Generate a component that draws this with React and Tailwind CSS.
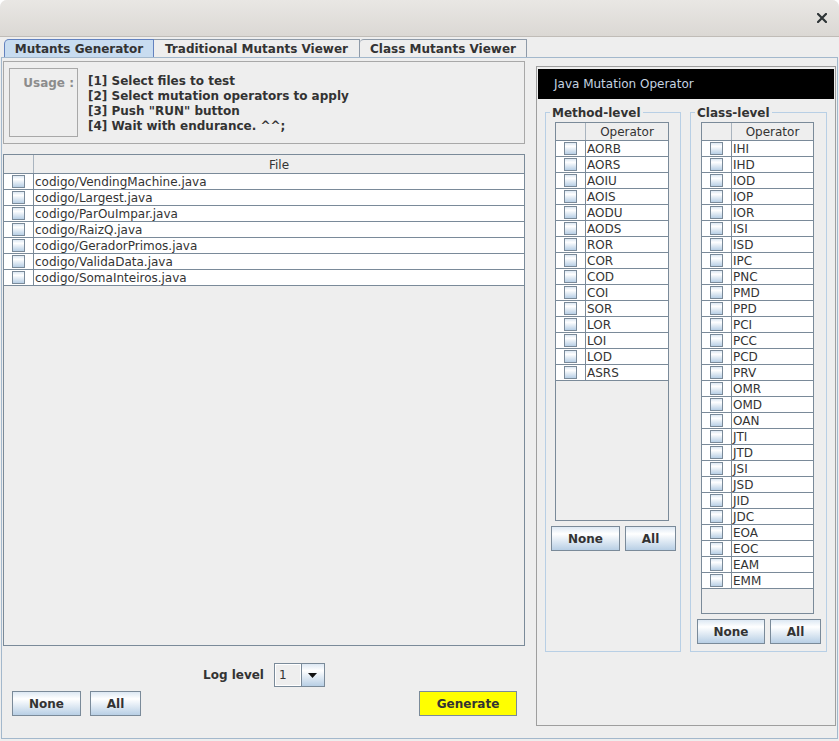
import React from "react";

const files = [
  "codigo/VendingMachine.java",
  "codigo/Largest.java",
  "codigo/ParOuImpar.java",
  "codigo/RaizQ.java",
  "codigo/GeradorPrimos.java",
  "codigo/ValidaData.java",
  "codigo/SomaInteiros.java",
];

const methodOps = ["AORB", "AORS", "AOIU", "AOIS", "AODU", "AODS", "ROR", "COR", "COD", "COI", "SOR", "LOR", "LOI", "LOD", "ASRS"];

const classOps = [
  "IHI", "IHD", "IOD", "IOP", "IOR", "ISI", "ISD", "IPC", "PNC", "PMD", "PPD", "PCI", "PCC", "PCD",
  "PRV", "OMR", "OMD", "OAN", "JTI", "JTD", "JSI", "JSD", "JID", "JDC", "EOA", "EOC", "EAM", "EMM",
];

// swing "ocean" checkbox
const CheckBox = () => (
  <span className="block w-[13px] h-[13px] border border-[#7a8a99] bg-linear-to-b from-[#dde8f3] via-white via-30% to-[#b8cfe5]" />
);

const Btn = ({ w, children }) => (
  <button className={`h-[25px] ${w} shrink-0 border border-[#7a8a99] bg-linear-to-b from-[#dde8f3] via-white via-30% to-[#b8cfe5] text-[12px] font-bold text-[#333333] leading-none`}>
    {children}
  </button>
);

const Table = ({ header, rows, size, headerH }) => (
  <div className={`${size} shrink-0 border border-[#7a8a99] bg-[#eeeeee] overflow-hidden`}>
    <div className={`flex ${headerH} border-b border-[#7a8a99] bg-[#eeeeee]`}>
      <div className="w-[30px] shrink-0 border-r border-[#a9b4bf]" />
      <div className="flex-1 flex items-center justify-center pt-[1px] text-[#333333]">{header}</div>
    </div>
    {rows.map((r) => (
      <div key={r} className="flex h-[16px] bg-white border-b border-[#7a8a99]">
        <div className="w-[30px] shrink-0 border-r border-[#7a8a99] flex items-center justify-center">
          <CheckBox />
        </div>
        <div className="flex-1 pl-[1px] pt-[1px] leading-[14px] text-[#333333] whitespace-nowrap">{r}</div>
      </div>
    ))}
  </div>
);

export default function App() {
  return (
    <div className="w-[839px] h-[741px] bg-white font-['DejaVu_Sans',sans-serif] text-[12px]">
      <div className="h-[741px] bg-[#eeeeee] rounded-t-[7px] flex flex-col overflow-hidden">
        {/* TITLE BAR */}
        <div className="h-[37px] shrink-0 border-b border-[#c0bcb7] bg-linear-to-b from-[#e9e7e4] to-[#dbd8d4] flex items-center justify-end pr-[12px]">
          <svg width="10" height="10" viewBox="0 0 10 10">
            <path d="M1 1L9 9M9 1L1 9" stroke="#2e3436" strokeWidth="2.2" strokeLinecap="square" />
          </svg>
        </div>
        <div className="h-[2px] shrink-0" />

        {/* TABS */}
        <div className="flex h-[18px] shrink-0 pl-[4px]">
          <div className="w-[150px] border border-b-0 border-[#6382bf] rounded-tl-[5px] bg-[#c8dcf0] flex items-center justify-center font-bold text-[#333333]">
            Mutants Generator
          </div>
          <div className="w-[206px] border border-b-0 border-l-0 border-[#8e9aa8] flex items-center justify-center font-bold text-[#333333]">
            Traditional Mutants Viewer
          </div>
          <div className="w-[167px] border border-b-0 border-l-0 border-[#8e9aa8] rounded-tl-[4px] flex items-center justify-center font-bold text-[#333333]">
            Class Mutants Viewer
          </div>
        </div>

        {/* TAB CONTENT */}
        <div className="mx-[1px] h-[682px] shrink-0 border border-[#a3b8cc] flex px-[1px]">
          {/* LEFT COLUMN */}
          <div className="w-[522px] shrink-0 pt-[3px] flex flex-col">
            <div className="h-[83px] shrink-0 border border-[#a8a8a8] flex pt-[6px] pl-[5px]">
              <div className="w-[69px] h-[69px] border border-[#a8a8a8] text-right pr-[3px] pt-[7px] font-bold text-[#8c8c8c] leading-[14px]">
                Usage :
              </div>
              <div className="ml-[10px] mt-[6px] font-bold leading-[15px] text-[#333333] whitespace-nowrap">
                <div>[1] Select files to test</div>
                <div>[2] Select mutation operators to apply</div>
                <div>[3] Push "RUN" button</div>
                <div>[4] Wait with endurance. ^^;</div>
              </div>
            </div>

            <div className="mt-[10px]">
              <Table header="File" rows={files} size="w-[522px] h-[492px]" headerH="h-[19px]" />
            </div>

            <div className="mt-[17px] h-[24px] flex items-center justify-center gap-[10px]">
              <span className="font-bold text-[#333333]">Log level</span>
              <div className="flex h-[24px] w-[51px] border border-[#7a8a99]">
                <div className="flex-1 bg-[#eeeeee] border border-[#ffffff] pl-[3px] flex items-center text-[#333333]">1</div>
                <div className="w-[23px] border-l border-[#7a8a99] bg-linear-to-b from-[#dde8f3] via-white via-30% to-[#b8cfe5] flex items-center justify-center">
                  <svg width="9" height="5" viewBox="0 0 9 5">
                    <path d="M0 0H9L4.5 5Z" fill="#111111" />
                  </svg>
                </div>
              </div>
            </div>

            <div className="mt-[4px] flex pl-[9px] pr-[8px]">
              <Btn w="w-[69px]">None</Btn>
              <div className="w-[9px]" />
              <Btn w="w-[51px]">All</Btn>
              <div className="flex-1" />
              <button className="h-[25px] w-[98px] border border-[#7a8a99] bg-[#ffff00] text-[12px] font-bold text-[#333333]">
                Generate
              </button>
            </div>
          </div>

          {/* RIGHT COLUMN */}
          <div className="ml-[11px] mt-[8px] w-[300px] h-[660px] shrink-0 border border-[#9e9e9e] p-[1px] pt-[2px] flex flex-col">
            <div className="h-[30px] shrink-0 bg-black text-[#c5d3e0] pl-[16px] flex items-center">
              Java Mutation Operator
            </div>
            <div className="flex mt-[6px] pl-[7px] gap-[9px]">
              <fieldset className="w-[136px] h-[547px] border border-[#b8cfe5] p-0 m-0 min-w-0">
                <legend className="ml-[4px] px-[2px] pt-[1px] font-bold text-[#333333] leading-[14px]">Method-level</legend>
                <div className="pt-[2px]">
                  <div className="ml-[9px]">
                    <Table header="Operator" rows={methodOps} size="w-[114px] h-[399px]" headerH="h-[18px]" />
                  </div>
                  <div className="mt-[5px] pl-[5px] flex gap-[5px]">
                    <Btn w="w-[69px]">None</Btn>
                    <Btn w="w-[51px]">All</Btn>
                  </div>
                </div>
              </fieldset>
              <fieldset className="w-[137px] h-[547px] border border-[#b8cfe5] p-0 m-0 min-w-0">
                <legend className="ml-[4px] px-[2px] pt-[1px] font-bold text-[#333333] leading-[14px]">Class-level</legend>
                <div className="pt-[2px]">
                  <div className="ml-[10px]">
                    <Table header="Operator" rows={classOps} size="w-[113px] h-[492px]" headerH="h-[18px]" />
                  </div>
                  <div className="mt-[5px] pl-[6px] flex gap-[5px]">
                    <Btn w="w-[68px]">None</Btn>
                    <Btn w="w-[51px]">All</Btn>
                  </div>
                </div>
              </fieldset>
            </div>
          </div>
        </div>
      </div>
    </div>
  );
}
